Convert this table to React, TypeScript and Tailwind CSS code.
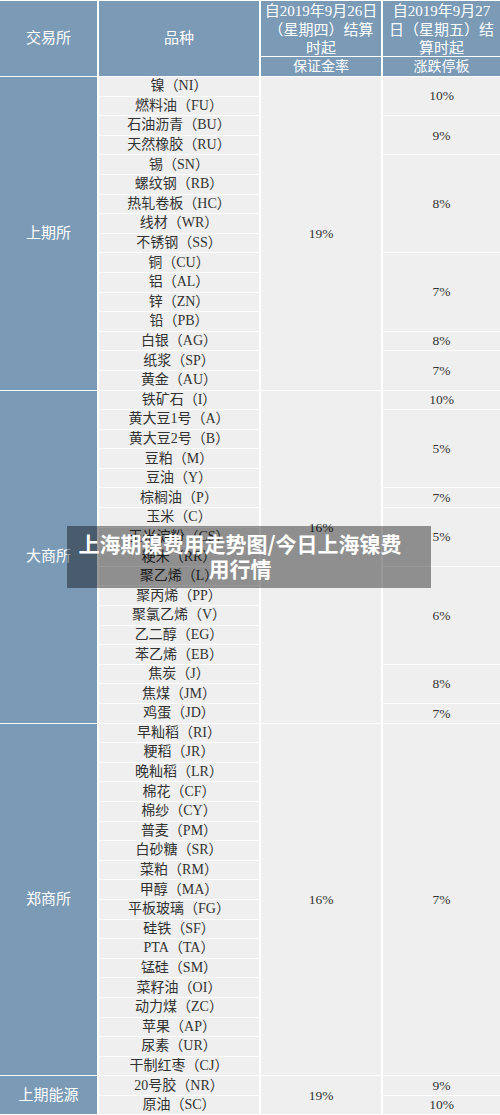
import React from 'react';

type Block = {
  ex: string;
  rows: string[];
  c3: [string, number][];
  c4: [string, number][];
};

const FLEX: Record<number, string> = {
  1: 'flex-[1_1_0px]',
  2: 'flex-[2_2_1px]',
  3: 'flex-[3_3_2px]',
  4: 'flex-[4_4_3px]',
  5: 'flex-[5_5_4px]',
  14: 'flex-[14_14_13px]',
  16: 'flex-[16_16_15px]',
  17: 'flex-[17_17_16px]',
  18: 'flex-[18_18_17px]',
};

const blocks: Block[] = [
  {
    ex: '上期所',
    rows: [
      '镍（NI）', '燃料油（FU）', '石油沥青（BU）', '天然橡胶（RU）', '锡（SN）', '螺纹钢（RB）',
      '热轧卷板（HC）', '线材（WR）', '不锈钢（SS）', '铜（CU）', '铝（AL）', '锌（ZN）',
      '铅（PB）', '白银（AG）', '纸浆（SP）', '黄金（AU）',
    ],
    c3: [['19%', 16]],
    c4: [['10%', 2], ['9%', 2], ['8%', 5], ['7%', 4], ['8%', 1], ['7%', 2]],
  },
  {
    ex: '大商所',
    rows: [
      '铁矿石（I）', '黄大豆1号（A）', '黄大豆2号（B）', '豆粕（M）', '豆油（Y）', '棕榈油（P）',
      '玉米（C）', '玉米淀粉（CS）', '粳米（RR）', '聚乙烯（L）', '聚丙烯（PP）', '聚氯乙烯（V）',
      '乙二醇（EG）', '苯乙烯（EB）', '焦炭（J）', '焦煤（JM）', '鸡蛋（JD）',
    ],
    c3: [['16%', 14], ['', 3]],
    c4: [['10%', 1], ['5%', 4], ['7%', 1], ['5%', 3], ['6%', 5], ['8%', 2], ['7%', 1]],
  },
  {
    ex: '郑商所',
    rows: [
      '早籼稻（RI）', '粳稻（JR）', '晚籼稻（LR）', '棉花（CF）', '棉纱（CY）', '普麦（PM）',
      '白砂糖（SR）', '菜粕（RM）', '甲醇（MA）', '平板玻璃（FG）', '硅铁（SF）', 'PTA（TA）',
      '锰硅（SM）', '菜籽油（OI）', '动力煤（ZC）', '苹果（AP）', '尿素（UR）', '干制红枣（CJ）',
    ],
    c3: [['16%', 18]],
    c4: [['7%', 18]],
  },
  {
    ex: '上期能源',
    rows: ['20号胶（NR）', '原油（SC）'],
    c3: [['19%', 2]],
    c4: [['9%', 1], ['10%', 1]],
  },
];

export default function App() {
  return (
    <div className="relative w-[500px] h-[1115px] overflow-hidden bg-white font-['Liberation_Serif','Noto_Sans_CJK_SC',serif] text-[#333333]">
      {/* header */}
      <div className="flex gap-x-[2px] pt-px">
        <div className="w-[97px] h-[75px] bg-[#7a9ab6] flex items-center justify-center text-white text-[15px]">
          交易所
        </div>
        <div className="w-[160px] h-[75px] bg-[#7a9ab6] flex items-center justify-center text-white text-[15px]">
          品种
        </div>
        <div className="w-[120px] flex flex-col gap-px">
          <div className="h-[55px] bg-[#7a9ab6] flex flex-col items-center justify-center pt-[3px] text-white text-[15px] leading-[18.5px] whitespace-nowrap">
            <span>自2019年9月26日</span>
            <span>（星期四）结算</span>
            <span>时起</span>
          </div>
          <div className="h-[19px] bg-[#7a9ab6] flex items-center justify-center text-white text-[14px] leading-none">
            保证金率
          </div>
        </div>
        <div className="w-[117px] flex flex-col gap-px">
          <div className="h-[55px] bg-[#7a9ab6] flex flex-col items-center justify-center pt-[3px] text-white text-[15px] leading-[18.5px] whitespace-nowrap">
            <span>自2019年9月27</span>
            <span>日（星期五）结</span>
            <span>算时起</span>
          </div>
          <div className="h-[19px] bg-[#7a9ab6] flex items-center justify-center text-white text-[14px] leading-none">
            涨跌停板
          </div>
        </div>
      </div>

      {/* body */}
      <div className="flex flex-col gap-px mt-px">
        {blocks.map((b) => (
          <div key={b.ex} className="flex gap-x-[2px]">
            <div className="w-[97px] bg-[#7a9ab6] flex items-center justify-center text-white text-[15px]">
              {b.ex}
            </div>
            <div className="w-[160px] flex flex-col gap-px">
              {b.rows.map((r) => (
                <div
                  key={r}
                  className="h-[18.6px] bg-[#efefef] flex items-center justify-center text-[14px] leading-none whitespace-nowrap"
                >
                  {r}
                </div>
              ))}
            </div>
            <div className="w-[120px] flex flex-col bg-[#efefef]">
              {b.c3.map(([t, n], i) => (
                <div key={i} className={`${FLEX[n]} flex items-center justify-center text-[13.5px] leading-none`}>
                  {t}
                </div>
              ))}
            </div>
            <div className="w-[117px] flex flex-col gap-px">
              {b.c4.map(([t, n], i) => (
                <div
                  key={i}
                  className={`${FLEX[n]} bg-[#efefef] flex items-center justify-center text-[13.5px] leading-none`}
                >
                  {t}
                </div>
              ))}
            </div>
          </div>
        ))}
      </div>

      {/* overlay banner */}
      <div className="absolute left-[67px] top-[526px] w-[364px] h-[62px] bg-black/40 pl-[10px] pr-[28px] pt-[5px] text-center text-white font-bold text-[21px] leading-[25px] font-['Noto_Sans_CJK_SC',sans-serif]">
        上海期镍费用走势图/今日上海镍费用行情
      </div>
    </div>
  );
}
